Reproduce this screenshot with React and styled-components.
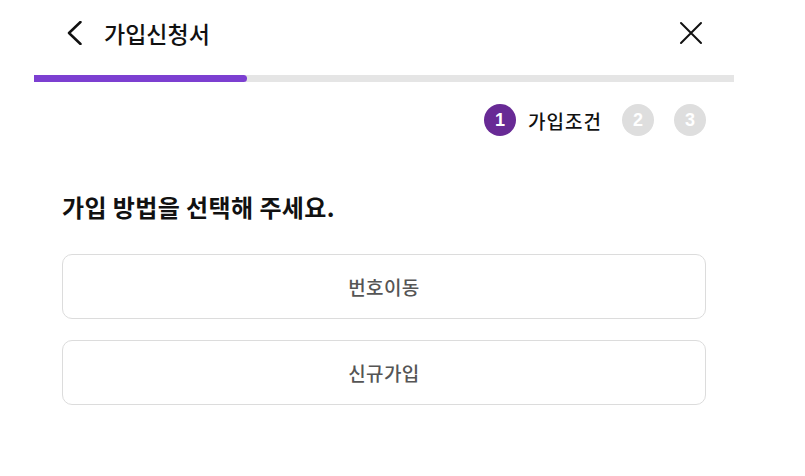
import React from 'react';
import styled, { createGlobalStyle } from 'styled-components';

const GlobalStyle = createGlobalStyle`
  body {
    margin: 0;
    background: #fff;
    font-family: "Noto Sans CJK KR", "Noto Sans", sans-serif;
    color: #111;
  }
`;

const Page = styled.div`
  width: 700px;
  margin-left: 34px;
`;

const Header = styled.div`
  display: flex;
  align-items: center;
  height: 66px;
  padding: 0 28px 0 28px;
`;

const IconButton = styled.button`
  display: flex;
  align-items: center;
  justify-content: center;
  width: 30px;
  height: 30px;
  padding: 0;
  border: none;
  background: none;
  cursor: pointer;
`;

const Title = styled.h1`
  flex: 1;
  margin: 0 0 0 12px;
  font-size: 23px;
  font-weight: 500;
  letter-spacing: 0;
  line-height: 1;
`;

const Track = styled.div`
  height: 7px;
  margin-top: 9px;
  background: #e5e5e5;
`;

const Fill = styled.div`
  height: 100%;
  background: #7c3fd1;
  border-radius: 0 4px 4px 0;
`;

const Steps = styled.div`
  display: flex;
  justify-content: flex-end;
  align-items: center;
  gap: 20px;
  margin-top: 22px;
  padding-right: 28px;
`;

const CurrentStep = styled.div`
  display: flex;
  align-items: center;
  gap: 12px;
`;

const StepDot = styled.span`
  display: flex;
  align-items: center;
  justify-content: center;
  width: 32px;
  height: 32px;
  border-radius: 50%;
  background: ${p => (p.$active ? '#682a95' : '#dedede')};
  color: #fff;
  font-family: "Liberation Sans", Arial, sans-serif;
  font-weight: 700;
  font-size: 18px;
`;

const StepLabel = styled.span`
  font-size: 19px;
  font-weight: 500;
  letter-spacing: 1px;
`;

const Body = styled.div`
  padding: 54px 28px 0;
`;

const Question = styled.h2`
  margin: 0 0 30px;
  font-size: 24px;
  font-weight: 700;
  letter-spacing: 0.4px;
  line-height: 34px;
`;

const Options = styled.div`
  display: flex;
  flex-direction: column;
  gap: 21px;
`;

const Option = styled.button`
  height: 65px;
  border: 1px solid #dcdcdc;
  border-radius: 10px;
  background: #fff;
  font-family: inherit;
  font-size: 19px;
  font-weight: 500;
  color: #555;
  letter-spacing: 0.4px;
  cursor: pointer;
`;

export default function App() {
  const options = ['번호이동', '신규가입'];
  return (
    <Page>
      <GlobalStyle />
      <Header>
        <IconButton aria-label="back">
          <svg width="24" height="24" viewBox="0 0 24 24" fill="none" stroke="#111" strokeWidth="2.5" strokeLinecap="round" strokeLinejoin="round">
            <path d="M15.5 1 L4 12 L15.5 23" />
          </svg>
        </IconButton>
        <Title>가입신청서</Title>
        <IconButton aria-label="close">
          <svg width="26" height="26" viewBox="0 0 26 26" fill="none" stroke="#111" strokeWidth="2" strokeLinecap="round">
            <path d="M3 3 L23 23 M23 3 L3 23" />
          </svg>
        </IconButton>
      </Header>
      <Track>
        <Fill style={{ width: `${(213 / 700) * 100}%` }} />
      </Track>
      <Steps>
        <CurrentStep>
          <StepDot $active>1</StepDot>
          <StepLabel>가입조건</StepLabel>
        </CurrentStep>
        <StepDot>2</StepDot>
        <StepDot>3</StepDot>
      </Steps>
      <Body>
        <Question>가입 방법을 선택해 주세요.</Question>
        <Options>
          {options.map(o => (
            <Option key={o}>{o}</Option>
          ))}
        </Options>
      </Body>
    </Page>
  );
}
